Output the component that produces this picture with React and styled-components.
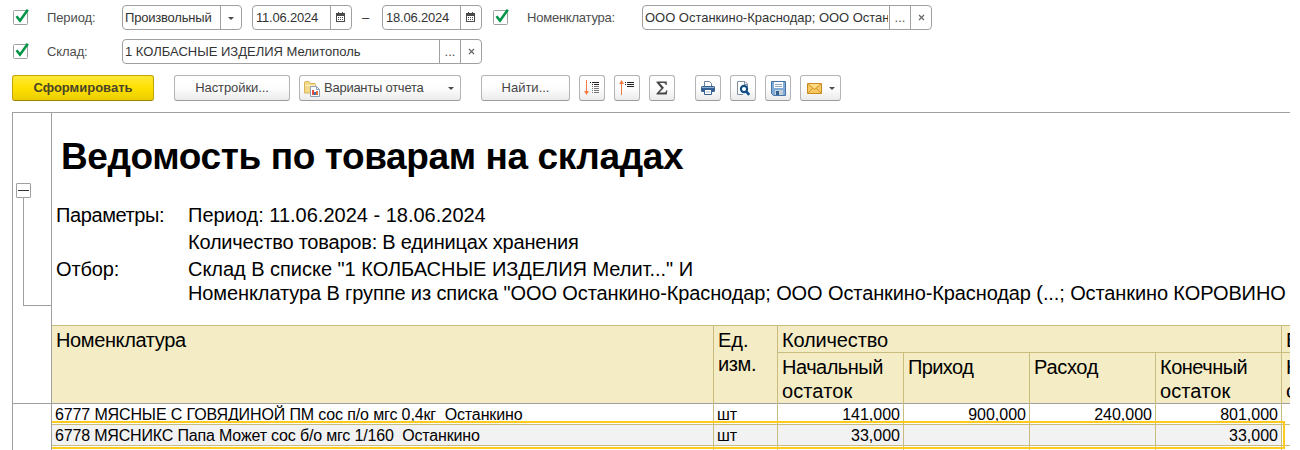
import React from 'react';
import styled, { createGlobalStyle, css } from 'styled-components';

const Global = createGlobalStyle`
  * { box-sizing: border-box; }
  body { margin: 0; background: #fff; overflow: hidden; }
`;

const Page = styled.main`
  width: 1300px;
  height: 450px;
  padding: 5px 10px 0 12px;
  overflow: hidden;
  display: flex;
  flex-direction: column;
  background: #fff;
  font: 13px/16px 'Liberation Sans', Arial, sans-serif;
  color: #333;
  white-space: nowrap;
`;
const FilterRow = styled.div`
  display: flex;
  align-items: center;
  flex: none;
  height: 25px;
  margin-bottom: ${(p) => p.$after}px;
`;
const CheckBox = styled.span`
  width: 17px;
  height: 25px;
  flex: none;
  margin-left: ${(p) => p.$gap || 0}px;
  svg { display: block; overflow: visible; }
`;
const Label = styled.span`
  width: ${(p) => p.$width}px;
  padding-left: 18px;
  color: #4d4d4d;
  letter-spacing: ${(p) => p.$track || 0}px;
`;
const Field = styled.div`
  display: flex;
  flex: none;
  width: ${(p) => p.$width}px;
  height: 25px;
  margin-left: ${(p) => p.$gap || 0}px;
  border: 1px solid #a0a0a0;
  border-radius: 4px;
  background: #fff;
`;
const FieldText = styled.span`
  flex: 1;
  min-width: 0;
  margin: 0 1px 0 ${(p) => p.$inset || 2}px;
  overflow: hidden;
  line-height: 23px;
  letter-spacing: ${(p) => p.$track || 0}px;
`;
const FieldButton = styled.span`
  width: 21px;
  flex: none;
  display: flex;
  align-items: center;
  justify-content: center;
  border-left: 1px solid #a0a0a0;
  color: #4d4d4d;
`;
const Dash = styled.span`
  width: 30px;
  padding-right: 3px;
  text-align: center;
`;
const Toolbar = styled.div`
  display: flex;
  flex: none;
  height: 26px;
  margin-bottom: 11px;
`;
const Button = styled.button`
  display: flex;
  flex: none;
  align-items: center;
  justify-content: center;
  width: ${(p) => p.$width || 26}px;
  height: 26px;
  margin: 0 ${(p) => p.$after || 0}px 0 0;
  padding: 0 0 0 ${(p) => p.$inset || 0}px;
  border: 1px solid #b4b4b4;
  border-bottom-color: #9c9c9c;
  border-radius: 3px;
  background: linear-gradient(#fff 0%, #fdfdfd 50%, #ebebeb 100%);
  font: inherit;
  color: #444;
  letter-spacing: ${(p) => p.$track || 0}px;
  ${(p) => p.$primary && css`
    border-color: #c4a500;
    border-bottom-color: #a08700;
    background: linear-gradient(#ffe838 0%, #ffe100 50%, #ebcd00 100%);
    font-weight: bold;
    color: #4a4528;
  `}
`;
const VariantLabel = styled.span`
  flex: 1;
  padding-left: 3px;
  text-align: left;
  letter-spacing: -0.25px;
`;
const Arrow = styled.i`
  border: 3px solid transparent;
  border-top-color: #4a4a4a;
  border-bottom: 0;
  margin: 1px ${(p) => p.$right || 0}px 0 ${(p) => p.$left || 0}px;
`;

const Report = styled.section`
  display: flex;
  flex: 1;
  min-height: 0;
  border-top: 1px solid #a0a0a0;
  color: #000;
`;
const Gutter = styled.aside`
  width: 40px;
  flex: none;
  display: flex;
  flex-direction: column;
  border-left: 1px solid #a0a0a0;
  border-right: 1px solid #a0a0a0;
`;
const Group = styled.div`
  height: 291px;
  padding: 70px 0 0 3px;
  border-bottom: 1px solid #a0a0a0;
`;
const Collapse = styled.div`
  width: 15px;
  height: 15px;
  padding: 6px 1px;
  border: 1px solid #a0a0a0;
  border-radius: 1px;
  &::before { content: ''; display: block; height: 1px; background: #333; }
`;
const Bracket = styled.div`
  width: 29px;
  height: 108px;
  margin-left: 7px;
  border-left: 1px solid #a0a0a0;
  border-bottom: 1px solid #a0a0a0;
`;
const Sheet = styled.div`
  flex: 1;
  min-width: 0;
  overflow: hidden;
  font-size: 20px;
`;
const Title = styled.h1`
  margin: 0;
  padding: 22px 0 0 9px;
  height: 89px;
  font-size: 37px;
  line-height: 44px;
  letter-spacing: -0.39px;
`;
const Params = styled.dl`
  display: grid;
  grid-template-columns: 132px 1fr;
  grid-template-rows: 27px 27px 24px 24px;
  height: 123px;
  margin: 0;
  padding-left: 4px;
  line-height: 27px;
`;
const Term = styled.dt`
  letter-spacing: ${(p) => p.$track || 0}px;
`;
const Value = styled.dd`
  grid-column: 2;
  margin: 0;
  letter-spacing: ${(p) => p.$track || 0}px;
`;
const Table = styled.div`
  display: grid;
  grid-template-columns: 662px 64px repeat(4, 126px) 9px;
  width: 1239px;
`;
const HeadTable = styled(Table)`
  grid-template-rows: 27px 51px;
  height: 79px;
  border-top: 1px solid #c8bd7f;
  border-bottom: 1px solid #a0a0a0;
  background: #f4ecc5;
`;
const HeadCell = styled.div`
  grid-row: ${(p) => p.$row || 'auto'};
  grid-column: ${(p) => p.$col || 'auto'};
  padding: 2px 0 0 4px;
  overflow: hidden;
  line-height: 24px;
  border-right: 1px solid #c8bd7f;
  border-bottom: ${(p) => (p.$line ? '1px solid #c8bd7f' : '0')};
`;
const HeadLine = styled.div`
  letter-spacing: ${(p) => p.$track || 0}px;
`;
const Rows = styled.div`
  position: relative;
`;
const Row = styled(Table)`
  height: 21px;
  font-size: 16px;
`;
const Cell = styled.div`
  border-right: 1px solid #c8bd7f;
  border-bottom: 1px solid #c8bd7f;
  height: 21px;
  padding: 1px 3px 0;
  line-height: 20px;
  white-space: pre;
  text-align: ${(p) => (p.$num ? 'right' : 'left')};
  letter-spacing: ${(p) => p.$track || 0}px;
  background: ${(p) => (p.$selected ? '#f2f2f2' : '#fff')};
`;
const Selection = styled.div`
  position: absolute;
  left: -2px;
  top: 17px;
  width: 1235px;
  height: 28px;
  border: 2px solid #ffcb1f;
`;

const Check = ({ gap }) => (
  <CheckBox $gap={gap}>
    <svg width="17" height="25" fill="none">
      <rect x="1.5" y="5.5" width="14" height="14" rx="1" stroke="#a0a0a0" />
      <path d="M4.5 11.2 L8 15.7 L15.8 4.8" stroke="#009646" strokeWidth="2.6" />
    </svg>
  </CheckBox>
);
const Calendar = () => (
  <svg width="10" height="11" shapeRendering="crispEdges">
    <path d="M0 1h9v9H0z" fill="#4a4a4a" />
    <path d="M2 0h1v2H2zM6 0h1v2H6z" fill="#4a4a4a" />
    <path d="M1 4h7v5H1z" fill="#fff" />
    <path d="M2 5h1v1H2zM4 5h1v1H4zM6 5h1v1H6zM2 7h1v1H2zM4 7h1v1H4zM6 7h1v1H6z" fill="#4a4a4a" />
  </svg>
);
const Cross = () => (
  <svg width="7" height="7" stroke="#666" strokeWidth="1.2">
    <path d="M1 1l5 5M6 1L1 6" />
  </svg>
);
const FolderIcon = () => (
  <svg width="17" height="17" viewBox="0 0 17 17">
    <path d="M.5 13V2.5q0-1 1-1h3.5l1.5 2h4q1 0 1 1V13z" fill="#f5d98b" stroke="#d9b25c" />
    <path d="M1 5.5h10" stroke="#fff0b8" />
    <path d="M6.5 6.5h6l3 3v7h-9z" fill="#fff" stroke="#8ca0b5" />
    <path d="M12.5 6.5v3h3" fill="none" stroke="#8ca0b5" />
    <path d="M8 10h2v5H8z" fill="#e34c3d" />
    <path d="M10 12h2v3h-2z" fill="#4472b8" />
    <path d="M12 11h2v4h-2z" fill="#e0703d" />
  </svg>
);
const SortDown = () => (
  <svg width="18" height="18" shapeRendering="crispEdges">
    <path d="M3 1h1v13H3z" fill="#f47b42" />
    <path d="M1 12h5l-2.5 4z" fill="#f47b42" shapeRendering="auto" />
    <path d="M7 3h1v1H7zM9 3h7v1H9zM9 5h1v1H9zM11 5h5v1h-5z" fill="#222" />
    <path d="M9 7h1v1H9zM11 7h5v1h-5zM11 9h5v1h-5zM9 9h1v1H9zM9 11h1v1H9zM11 11h5v1h-5zM11 13h5v1h-5zM9 13h1v1H9z" fill="#777" />
  </svg>
);
const SortUp = () => (
  <svg width="18" height="18" shapeRendering="crispEdges">
    <path d="M3 3h1v13H3z" fill="#f47b42" />
    <path d="M1 5h5L3.5 1z" fill="#f47b42" shapeRendering="auto" />
    <path d="M7 3h1v1H7zM9 3h7v1H9zM9 5h7v1H9zM9 7h7v1H9zM7 5h1v1H7z" fill="#222" />
  </svg>
);
const Sigma = () => (
  <svg width="12" height="14">
    <path d="M.5 .5H10.8V4H9.8Q9.5 2 7.5 2H3.8L8 6.8L3.5 11.6H8Q10 11.6 10.5 9.3H11.4L10.8 13.5H.5V12.6L5.3 7.2L.5 1.4Z" fill="#4a4a4a" />
  </svg>
);
const Printer = () => (
  <svg width="16" height="16">
    <path d="M4.5 6V1.5h5l2 2V6" fill="#fff" stroke="#6d8297" />
    <rect x="1" y="6" width="14" height="6" rx="1.5" fill="#34618f" />
    <path d="M2 7.5h12" stroke="#8eb2d3" />
    <path d="M4.5 9.5h7v5h-7z" fill="#fff" stroke="#34618f" />
    <path d="M6 12h4" stroke="#9bb0c3" />
  </svg>
);
const Preview = () => (
  <svg width="16" height="16" fill="none">
    <path d="M12.5 7V4L10 1.5H2.5v13H8" fill="#fff" stroke="#8292a3" />
    <path d="M9.5 1.5v3h3" stroke="#8292a3" />
    <circle cx="9" cy="9" r="3.1" fill="#fff" stroke="#104f85" strokeWidth="2.1" />
    <path d="M11.2 11.3l3 3.5" stroke="#104f85" strokeWidth="2.6" />
  </svg>
);
const Save = () => (
  <svg width="15" height="15">
    <path d="M.5.5h14v14h-12l-2-2z" fill="#7fabd6" stroke="#4575a8" />
    <path d="M3 1h9v6H3z" fill="#fff" />
    <path d="M4 3.5h7M4 5.5h7" stroke="#8ca4b9" />
    <path d="M4 9h8v5H4z" fill="#c3ced8" />
    <path d="M5 10h3v4H5z" fill="#34618f" />
  </svg>
);
const Mail = () => (
  <svg width="15" height="11" fill="none">
    <path d="M.5.5h14v10H.5z" fill="#f7c760" stroke="#c98a22" />
    <path d="M2 1h11L7.5 5.5z" fill="#ffdd88" />
    <path d="M1 1l6.5 5.5L14 1M1 10l4.8-4.8M14 10L9.2 5.2" stroke="#c98a22" strokeWidth=".8" />
  </svg>
);

const items = [
  { name: '6777 МЯСНЫЕ С ГОВЯДИНОЙ ПМ сос п/о мгс 0,4кг  Останкино', track: -0.13, values: ['141,000', '900,000', '240,000', '801,000'] },
  { name: '6778 МЯСНИКС Папа Может сос б/о мгс 1/160  Останкино', track: -0.17, values: ['33,000', '', '', '33,000'], selected: true },
  { name: '', unit: '', values: ['', '', '', ''] },
];

export default function App() {
  return (
    <Page>
      <Global />
      <FilterRow $after={9}>
        <Check />
        <Label $width={93} $track={-0.1}>Период:</Label>
        <Field $width={120}>
          <FieldText $track={-0.2}>Произвольный</FieldText>
          <FieldButton><Arrow /></FieldButton>
        </Field>
        <Field $width={100} $gap={10}>
          <FieldText $inset={3} $track={-0.2}>11.06.2024</FieldText>
          <FieldButton><Calendar /></FieldButton>
        </Field>
        <Dash>–</Dash>
        <Field $width={100}>
          <FieldText $inset={3} $track={-0.2}>18.06.2024</FieldText>
          <FieldButton><Calendar /></FieldButton>
        </Field>
        <Check gap={10} />
        <Label $width={133} $track={-0.22}>Номенклатура:</Label>
        <Field $width={290}>
          <FieldText $track={-0.02}>ООО Останкино-Краснодар; ООО Остан</FieldText>
          <FieldButton>...</FieldButton>
          <FieldButton><Cross /></FieldButton>
        </Field>
      </FilterRow>
      <FilterRow $after={11}>
        <Check />
        <Label $width={93} $track={-0.1}>Склад:</Label>
        <Field $width={360}>
          <FieldText>1 КОЛБАСНЫЕ ИЗДЕЛИЯ Мелитополь</FieldText>
          <FieldButton>...</FieldButton>
          <FieldButton><Cross /></FieldButton>
        </Field>
      </FilterRow>
      <Toolbar>
        <Button $primary $width={142} $after={20}>Сформировать</Button>
        <Button $width={116} $after={9} $track={-0.08}>Настройки...</Button>
        <Button $width={162} $after={20} $inset={4}>
          <FolderIcon />
          <VariantLabel>Варианты отчета</VariantLabel>
          <Arrow $right={6} />
        </Button>
        <Button $width={89} $after={9}>Найти...</Button>
        <Button $after={9}><SortDown /></Button>
        <Button $after={9}><SortUp /></Button>
        <Button $after={20}><Sigma /></Button>
        <Button $after={9}><Printer /></Button>
        <Button $after={9}><Preview /></Button>
        <Button $after={9}><Save /></Button>
        <Button $width={41}><Mail /><Arrow $left={7} /></Button>
      </Toolbar>
      <Report>
        <Gutter>
          <Group>
            <Collapse />
            <Bracket />
          </Group>
        </Gutter>
        <Sheet>
          <Title>Ведомость по товарам на складах</Title>
          <Params>
            <Term $track={-0.4}>Параметры:</Term>
            <Value>Период: 11.06.2024 - 18.06.2024</Value>
            <Value $track={-0.21}>Количество товаров: В единицах хранения</Value>
            <Term $track={-0.15}>Отбор:</Term>
            <Value $track={-0.03}>Склад В списке "1 КОЛБАСНЫЕ ИЗДЕЛИЯ Мелит..." И</Value>
            <Value $track={-0.107}>Номенклатура В группе из списка "ООО Останкино-Краснодар; ООО Останкино-Краснодар (...; Останкино КОРОВИНО</Value>
          </Params>
          <HeadTable>
            <HeadCell $row="1 / 3"><HeadLine $track={-0.38}>Номенклатура</HeadLine></HeadCell>
            <HeadCell $row="1 / 3">
              <HeadLine>Ед.</HeadLine>
              <HeadLine $track={-0.4}>изм.</HeadLine>
            </HeadCell>
            <HeadCell $row="1" $col="3 / 7" $line><HeadLine $track={-0.15}>Количество</HeadLine></HeadCell>
            <HeadCell $row="1" $col="7" $line><HeadLine>В</HeadLine></HeadCell>
            <HeadCell $row="2" $col="3">
              <HeadLine $track={-0.5}>Начальный</HeadLine>
              <HeadLine $track={0.1}>остаток</HeadLine>
            </HeadCell>
            <HeadCell $row="2" $col="4"><HeadLine $track={-0.6}>Приход</HeadLine></HeadCell>
            <HeadCell $row="2" $col="5"><HeadLine $track={-0.3}>Расход</HeadLine></HeadCell>
            <HeadCell $row="2" $col="6">
              <HeadLine $track={-0.5}>Конечный</HeadLine>
              <HeadLine $track={0.1}>остаток</HeadLine>
            </HeadCell>
            <HeadCell $row="2" $col="7">
              <HeadLine>Н</HeadLine>
              <HeadLine>о</HeadLine>
            </HeadCell>
          </HeadTable>
          <Rows>
            {items.map((item, i) => (
              <Row key={i}>
                <Cell $selected={item.selected} $track={item.track}>{item.name}</Cell>
                <Cell $selected={item.selected}>{item.unit ?? 'шт'}</Cell>
                {item.values.map((v, k) => (
                  <Cell key={k} $num $selected={item.selected}>{v}</Cell>
                ))}
                <Cell />
              </Row>
            ))}
            <Selection />
          </Rows>
        </Sheet>
      </Report>
    </Page>
  );
}
